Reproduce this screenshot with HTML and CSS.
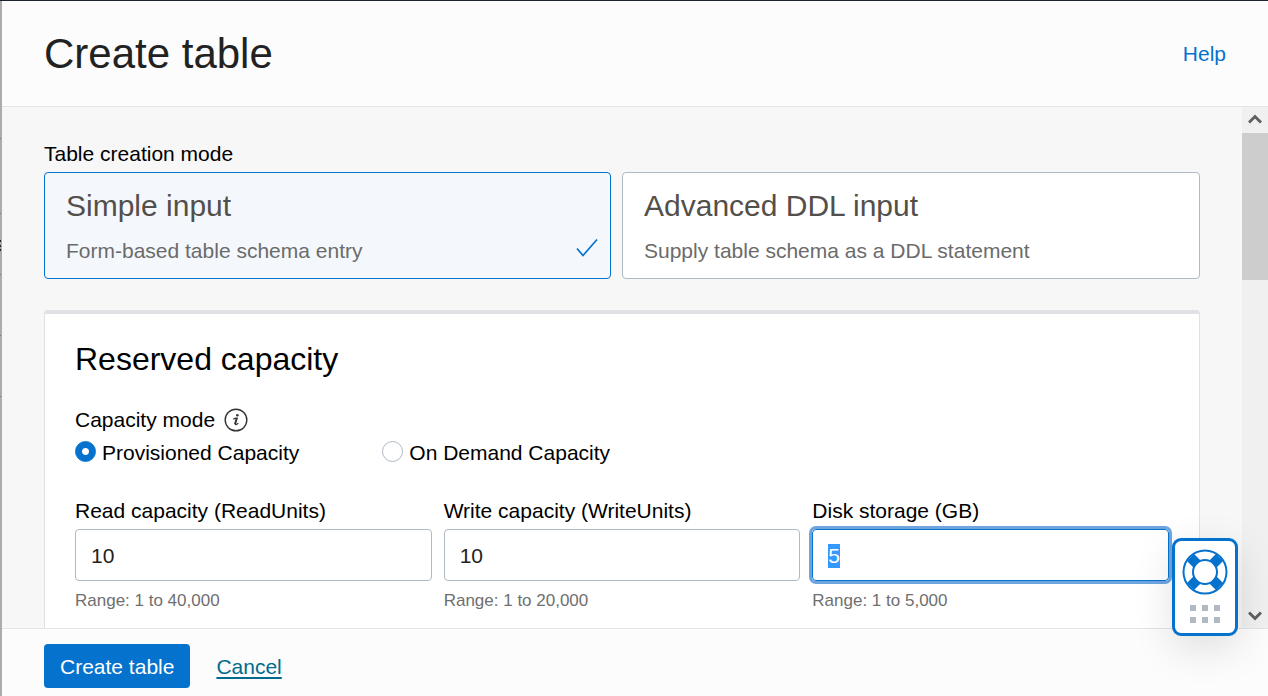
FILE: index.html
```html
<!DOCTYPE html>
<html lang="en">
<head>
<meta charset="utf-8">
<title>Create table</title>
<link rel="stylesheet" href="styles.css">
</head>
<body>
<div class="page">
  <div class="backdrop" aria-hidden="true">
    <svg width="2" height="695" viewBox="0 0 2 695">
      <path d="M0 137.500h1M0 212.500h1M0 273.500h1M0 334.500h1M0 395.500h1" stroke="#777"/>
      <path d="M0 240h1M0 245h1M0 249h1" stroke="#222" stroke-width="2"/>
    </svg>
  </div>
  <section class="dialog" aria-labelledby="dialog-title">
    <header class="dialog-header">
      <h1 class="dialog-title" id="dialog-title">Create table</h1>
      <a class="help-link" href="#">Help</a>
    </header>
    <div class="dialog-body">
      <main class="content">
        <p class="label" id="mode-label">Table creation mode</p>
        <div class="modes" role="group" aria-labelledby="mode-label">
          <button class="mode mode-selected" type="button" aria-pressed="true">
            <span class="mode-title">Simple input</span>
            <span class="mode-text">Form-based table schema entry</span>
            <svg class="check" width="22" height="20" viewBox="0 0 22 20" aria-hidden="true"><path d="M1 10.500L7 17.500L21 1.500" fill="none" stroke="#0572ce" stroke-width="1.700"/></svg>
          </button>
          <button class="mode" type="button" aria-pressed="false">
            <span class="mode-title">Advanced DDL input</span>
            <span class="mode-text">Supply table schema as a DDL statement</span>
          </button>
        </div>
        <section class="panel">
          <h2 class="panel-title">Reserved capacity</h2>
          <div class="capacity-label">
            <span id="capacity-label">Capacity mode</span>
            <svg width="24" height="24" viewBox="0 0 24 24" role="img" aria-label="Information">
              <circle cx="12" cy="12" r="10.800" fill="none" stroke="#333" stroke-width="1.400"/>
              <circle cx="13.300" cy="7.200" r="1.250" fill="#333"/>
              <path d="M9.300 11.300C10.400 10.500 12 10 13.200 10.200L11.300 15.700C11 17 12.300 16.800 14.300 15.300" fill="none" stroke="#333" stroke-width="1.200"/>
              <path d="M12.600 10.400L10.900 15.900" stroke="#333" stroke-width="1.700"/>
            </svg>
          </div>
          <div class="options" role="radiogroup" aria-labelledby="capacity-label">
            <label class="option"><input class="radio" type="radio" name="capacity" checked>Provisioned Capacity</label>
            <label class="option"><input class="radio" type="radio" name="capacity">On Demand Capacity</label>
          </div>
          <div class="fields">
            <div class="field">
              <label for="read">Read capacity (ReadUnits)</label>
              <input class="text-box" id="read" type="text" value="10">
              <span class="hint">Range: 1 to 40,000</span>
            </div>
            <div class="field">
              <label for="write">Write capacity (WriteUnits)</label>
              <input class="text-box" id="write" type="text" value="10">
              <span class="hint">Range: 1 to 20,000</span>
            </div>
            <div class="field">
              <label for="disk">Disk storage (GB)</label>
              <input class="text-box" id="disk" type="text" value="5">
              <span class="hint">Range: 1 to 5,000</span>
            </div>
          </div>
        </section>
      </main>
      <div class="scrollbar">
        <button class="scroll-button" type="button" aria-label="Scroll up"><svg width="14" height="12" viewBox="0 0 14 12"><path d="M1 8.500L7 2.500L13 8.500" fill="none" stroke="#606060" stroke-width="3"/></svg></button>
        <div class="scroll-thumb"></div>
        <button class="scroll-button scroll-down" type="button" aria-label="Scroll down"><svg width="14" height="12" viewBox="0 0 14 12"><path d="M1 3.500L7 9.500L13 3.500" fill="none" stroke="#606060" stroke-width="3"/></svg></button>
      </div>
    </div>
    <footer class="dialog-footer">
      <button class="primary" type="button">Create table</button>
      <a class="cancel-link" href="#">Cancel</a>
    </footer>
  </section>
</div>
<button class="support" type="button" aria-label="Support">
  <svg width="46" height="46" viewBox="0 0 46 46" aria-hidden="true">
    <path d="M8.500 8.500L15 15M31 31L37.500 37.500M37.500 8.500L31 15M15 31L8.500 37.500" stroke="#0572ce" stroke-width="10"/>
    <circle cx="23" cy="23" r="21.500" fill="none" stroke="#0572ce" stroke-width="2"/>
    <circle cx="23" cy="23" r="12" fill="#fff" stroke="#0572ce" stroke-width="2"/>
  </svg>
  <svg width="30" height="18" viewBox="0 0 30 18" aria-hidden="true"><path d="M0 0h6v6H0zM12 0h6v6h-6zM24 0h6v6h-6zM0 12h6v6H0zM12 12h6v6h-6zM24 12h6v6h-6z" fill="#b1b9c3"/></svg>
</button>
<script src="script.js"></script>
</body>
</html>
```
FILE: styles.css
```css
* {
  box-sizing: border-box;
}

body {
  margin: 0;
  font-family: "Liberation Sans", Arial, sans-serif;
  font-size: 21px;
  line-height: 24px;
  color: #000;
}

h1,
h2,
p {
  margin: 0;
  font-weight: 400;
}

button,
input {
  font: inherit;
}

.page {
  display: flex;
  height: 100vh;
  border-top: 1px solid #1c232d;
}

.backdrop {
  width: 2px;
  overflow: hidden;
  background: #acacac;
}

.dialog {
  flex: 1;
  min-width: 0;
  display: flex;
  flex-direction: column;
  background: #fcfcfc;
}

.dialog-header {
  display: flex;
  align-items: center;
  justify-content: space-between;
  padding: 29px 42px 28px;
  border-bottom: 1px solid #e2e4e6;
}

.dialog-title {
  font-size: 42px;
  line-height: 48px;
  color: #222;
}

.help-link {
  color: #0572ce;
  text-decoration: none;
}

.dialog-body {
  flex: 1;
  min-height: 0;
  display: flex;
  background: #f7f7f7;
}

.content {
  flex: 1;
  min-width: 0;
  overflow: hidden;
  padding: 35px 42px 0;
}

.modes {
  display: grid;
  grid-template-columns: 1fr 50%;
  gap: 11px;
  margin: 6px 0 31px;
}

.mode {
  position: relative;
  display: flex;
  flex-direction: column;
  gap: 15px;
  padding: 15px 21px;
  text-align: left;
  color: #534f4b;
  background: #fff;
  border: 1px solid #b1b9c3;
  border-radius: 4px;
}

.mode-selected {
  background: #f4f8fd;
  border-color: #0572ce;
}

.mode-title {
  font-size: 30px;
  line-height: 36px;
}

.mode-text {
  color: #6b6b6b;
}

.check {
  position: absolute;
  right: 12px;
  bottom: 20px;
}

.panel {
  padding: 26px 30px;
  background: #fff;
  border: 1px solid #dfe1e5;
  border-top-width: 4px;
  border-radius: 4px 4px 0 0;
}

.panel-title {
  font-size: 32px;
  line-height: 38px;
}

.capacity-label {
  display: flex;
  align-items: center;
  gap: 9px;
  margin-top: 30px;
}

.options {
  display: grid;
  grid-template-columns: 28% 1fr;
  gap: 1px;
  margin: 9px 0 34px;
}

.option {
  display: flex;
  gap: 6px;
}

.radio {
  appearance: none;
  flex: none;
  width: 21px;
  height: 21px;
  margin: 0;
  background: #fff;
  border: 1px solid #b1b9c3;
  border-radius: 50%;
}

.radio:checked {
  background: radial-gradient(circle, #fff 3px, #0572ce 4px);
  border-color: #0572ce;
}

.fields {
  display: grid;
  grid-template-columns: repeat(3, 1fr);
  gap: 12px;
}

.field {
  display: flex;
  flex-direction: column;
}

.text-box {
  width: 100%;
  height: 52px;
  margin: 6px 0 10px;
  padding: 2px 15px 0;
  color: #222;
  background: #fff;
  border: 1px solid #b1b9c3;
  border-radius: 4px;
}

.text-box:focus {
  border-color: #0572ce;
  outline: 3px solid #6ea5e1;
  outline-offset: 0;
}

.text-box::selection {
  color: #fff;
  background: #3399ff;
}

.hint {
  font-size: 17px;
  line-height: 20px;
  color: #6f6f6f;
}

.scrollbar {
  width: 26px;
  display: flex;
  flex-direction: column;
  background: #f0f0f0;
}

.scroll-button {
  display: flex;
  align-items: center;
  justify-content: center;
  height: 26px;
  padding: 0;
  background: none;
  border: 0;
}

.scroll-thumb {
  height: 147px;
  background: #cdcdcd;
}

.scroll-down {
  margin-top: auto;
}

.dialog-footer {
  display: flex;
  align-items: center;
  gap: 26px;
  padding: 15px 42px 8px;
  border-top: 1px solid #e2e4e6;
}

.primary {
  padding: 11px 16px 9px;
  color: #fff;
  background: #0572ce;
  border: 0;
  border-radius: 4px;
}

.cancel-link {
  padding-top: 2px;
  color: #006b8f;
  text-underline-offset: 3px;
  text-decoration-thickness: 2px;
}

.support {
  position: fixed;
  right: 30px;
  bottom: 60px;
  width: 66px;
  height: 98px;
  display: flex;
  flex-direction: column;
  align-items: center;
  gap: 10px;
  padding: 8px 0;
  background: #fff;
  border: 3px solid #0572ce;
  border-radius: 9px;
  box-shadow: 0 12px 40px rgba(0, 0, 0, 0.12);
}
```
FILE: script.js
```js
const disk = document.getElementById("disk");
disk.focus({ preventScroll: true });
disk.select();
```
